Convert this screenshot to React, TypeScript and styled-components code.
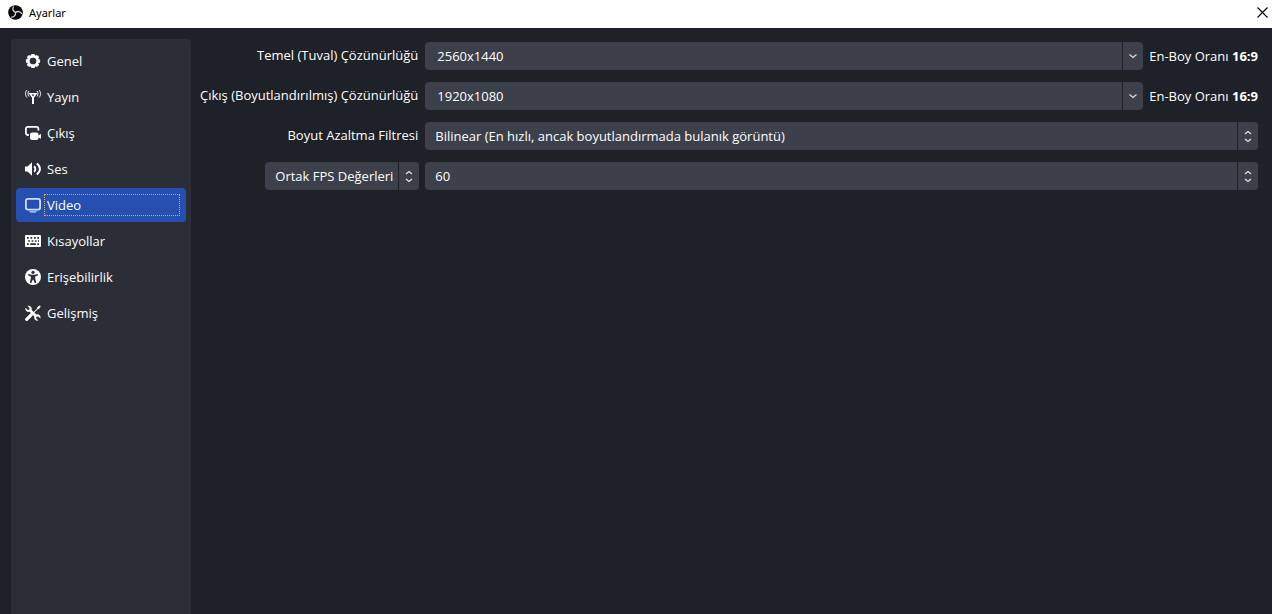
import React, { useState } from "react";
import styled, { createGlobalStyle } from "styled-components";

const GlobalStyle = createGlobalStyle`
  *, *::before, *::after { box-sizing: border-box; }
  html, body { margin: 0; padding: 0; background: #1e2128; }
  body, button, input, select {
    font-family: "Open Sans", "Noto Sans", sans-serif;
    font-size: 13px;
    line-height: 18px;
    color: #fefefe;
  }
`;

const Window = styled.div`
  display: flex;
  flex-direction: column;
  min-height: 100vh;
  background: #1e2128;
`;

const TitleBar = styled.header`
  display: flex;
  align-items: center;
  gap: 6px;
  height: 28px;
  padding: 0 3px 3px 8px;
  background: #ffffff;
  color: #000000;
`;

const Title = styled.h1`
  flex: 1;
  margin: 0;
  font-family: "Noto Sans", sans-serif;
  font-size: 11px;
  line-height: 15px;
  font-weight: 400;
`;

const CloseButton = styled.button`
  display: flex;
  padding: 0;
  border: 0;
  background: transparent;
  color: #000000;
`;

const Body = styled.div`
  flex: 1;
  display: flex;
  gap: 9px;
  padding: 11px 14px 0 11px;
`;

const Sidebar = styled.nav`
  flex: 0 0 180px;
  display: flex;
  flex-direction: column;
  gap: 2px;
  padding: 5px;
  border-radius: 4px 4px 0 0;
  background: #2b2e37;
`;

const NavItem = styled.button<{ $active: boolean }>`
  display: flex;
  align-items: center;
  gap: 3px;
  height: 34px;
  padding: 0 6px 0 9px;
  border: 0;
  border-radius: 4px;
  text-align: left;
  background: ${(p) => (p.$active ? "#264fb2" : "transparent")};
`;

const NavText = styled.span<{ $active: boolean }>`
  flex: 1;
  padding: 1px 2px;
  border: 1px dotted ${(p) => (p.$active ? "#d9b04d" : "transparent")};
`;

const Form = styled.form`
  flex: 1;
  min-width: 0;
  display: grid;
  grid-template-columns: max-content minmax(0, 1fr);
  grid-auto-rows: 28px;
  align-content: start;
  gap: 12px 6px;
  padding-top: 3px;
`;

const Label = styled.label`
  padding-right: 1px;
  text-align: right;
  line-height: 26px;
`;

const LabelCell = styled.div`
  display: flex;
  justify-content: flex-end;
`;

const Field = styled.div`
  display: flex;
  align-items: center;
  gap: 6px;
`;

const Combo = styled.div`
  flex: 1;
  min-width: 0;
  display: flex;
  gap: 1px;
  height: 28px;
`;

const ComboInput = styled.input`
  flex: 1;
  min-width: 0;
  padding: 0 12px;
  border: 0;
  border-radius: 4px 0 0 4px;
  outline: 0;
  background: #3c404b;
`;

const ComboButton = styled.button`
  display: flex;
  align-items: center;
  justify-content: center;
  width: 20px;
  padding: 0;
  border: 0;
  border-radius: 0 4px 4px 0;
  background: #3c404b;
`;

const SelectBox = styled.div<{ $compact?: boolean }>`
  flex: ${(p) => (p.$compact ? "0 0 154px" : "1")};
  min-width: 0;
  display: grid;
  grid-template-columns: minmax(0, 1fr) 21px;
  height: 28px;
`;

const Select = styled.select`
  grid-area: 1 / 1 / 2 / 3;
  width: 100%;
  height: 28px;
  padding: 0 22px 0 10px;
  border: 0;
  border-radius: 4px;
  outline: 0;
  appearance: none;
  background: #3c404b;
`;

const SelectArrows = styled.span`
  grid-area: 1 / 2;
  z-index: 1;
  display: flex;
  align-items: center;
  justify-content: center;
  border-left: 1px solid #1e2128;
  pointer-events: none;
`;

const AspectRatio = styled.span`
  white-space: nowrap;
`;

const Svg = ({ children, size = 16 }: { children: React.ReactNode; size?: number }) => (
  <svg width={size} height={size} viewBox={`0 0 ${size} ${size}`} fill="none" aria-hidden="true">
    {children}
  </svg>
);

const GearIcon = () => (
  <Svg>
    <circle cx="8" cy="8" r="4.700" stroke="#fefefe" strokeWidth="2.700" />
    {[0, 45, 90, 135, 180, 225, 270, 315].map((a) => (
      <rect key={a} x="6.2" y=".9" width="3.6" height="2.6" rx=".6" fill="#fefefe" transform={`rotate(${a} 8 8)`} />
    ))}
  </Svg>
);

const AntennaIcon = () => (
  <Svg>
    <path d="M5 4.800h6L8 8.800z" stroke="#fefefe" strokeWidth="1.500" />
    <path d="M8 8v7" stroke="#fefefe" strokeWidth="2" />
    <path d="M4 2C2.700 3.300 2.700 6.200 4 7.500M12 2c1.300 1.300 1.300 4.200 0 5.500M2 1C0 3.200 0 6.300 2 8.500M14 1c2 2.200 2 5.300 0 7.500" stroke="#fefefe" />
  </Svg>
);

const OutputIcon = () => (
  <Svg>
    <path d="M3.800 10H2.900a2 2 0 0 1-2-2V3.900a2 2 0 0 1 2-2h8.500a2 2 0 0 1 2 2v1.600" stroke="#fefefe" strokeWidth="1.800" />
    <rect x="5" y="7.500" width="8.500" height="7.500" rx="2" fill="#fefefe" />
    <path d="M12.500 11 16 8.800v5L12.500 12z" fill="#fefefe" />
  </Svg>
);

const SpeakerIcon = () => (
  <Svg>
    <path d="M0 5.500h2.500L7 1.200v13.600L2.500 10.500H0z" fill="#fefefe" />
    <path d="M9 5.200c1.800 1.500 1.800 4.100 0 5.600M11.800 2.600c4.200 3 4.200 7.800 0 10.800" stroke="#fefefe" strokeWidth="1.900" />
  </Svg>
);

const MonitorIcon = () => (
  <Svg>
    <rect x=".9" y="1.900" width="14.200" height="10.700" rx="2" stroke="#cfe0ff" strokeWidth="1.800" />
    <path d="M4 14.300h8l-1.500 1.100h-5z" fill="#cfe0ff" />
  </Svg>
);

const KeyboardIcon = () => (
  <Svg>
    <rect y="2" width="16" height="12" rx="1" fill="#fefefe" />
    <path
      d="M2 4.800h1.700M5.500 4.800h1.700M8.900 4.800h1.700M12.300 4.800H14M3.200 8h1.700M6.600 8h1.700M9.900 8h1.700M13 8h1M2 11.200h1.700M5.200 11.200h5.700M12.300 11.200H14"
      stroke="#2b2e37"
      strokeWidth="1.700"
    />
  </Svg>
);

const AccessibilityIcon = () => (
  <Svg>
    <circle cx="8" cy="8" r="8" fill="#fefefe" />
    <circle cx="8" cy="3.300" r="1.600" fill="#2b2e37" />
    <path d="m3.300 5 3 .7h3.400l3-.7.400 1.200-2.900 1.300v2.200l1 4-1.500.4L8.300 10.800h-.6l-1.400 3.300-1.500-.4 1-4V7.500L2.900 6.200z" fill="#2b2e37" />
  </Svg>
);

const ToolsIcon = () => (
  <Svg>
    <path d="m1.700 14.300 4.500-4.500" stroke="#fefefe" strokeWidth="3.200" strokeLinecap="round" />
    <path d="m6.500 9.500 5.700-5.700.5-1.700L15 .8l.4.4-1.300 2.300-1.600.6-5.600 5.700z" fill="#fefefe" stroke="#fefefe" strokeWidth=".6" />
    <path d="M2.300.8 4.600 3 4.200 4.500 2.700 4.900.5 2.700C-.2 5.500 2 7.400 4.600 6.800l4.700 4.700c-.6 2.700 1.500 4.700 4 4l-2.200-2.200.4-1.500 1.600-.4 2.300 2.200c.7-2.600-1.400-4.800-4.100-4.100L6.700 4.900C7.300 2.100 5.100.1 2.300.8z" fill="#fefefe" />
  </Svg>
);

const ObsLogo = () => (
  <Svg size={15}>
    <circle cx="7.500" cy="7.500" r="7.300" fill="#080808" />
    {[0, 120, 240].map((a) => (
      <path
        key={a}
        d="M7.500 7.500C5.200 6.700 4.200 4.300 5.300 1.900"
        stroke="#d8d8d8"
        strokeWidth="1.300"
        strokeLinecap="round"
        transform={`rotate(${a} 7.500 7.500)`}
      />
    ))}
  </Svg>
);

const CloseIcon = () => (
  <Svg size={13}>
    <path d="m1.500 1.500 10 10M11.500 1.500l-10 10" stroke="#000000" strokeWidth="1.100" />
  </Svg>
);

const ChevronDown = () => (
  <Svg size={10}>
    <path d="m1.500 3.500 3.500 3 3.500-3" stroke="#dcdde0" strokeWidth="1.300" />
  </Svg>
);

const UpDownIcon = () => (
  <Svg size={14}>
    <path d="m4 5 3-2.500L10 5M4 10l3 2.500 3-2.500" stroke="#e8e8ea" strokeWidth="1.200" />
  </Svg>
);

const sections = [
  { name: "Genel", Icon: GearIcon },
  { name: "Yayın", Icon: AntennaIcon },
  { name: "Çıkış", Icon: OutputIcon },
  { name: "Ses", Icon: SpeakerIcon },
  { name: "Video", Icon: MonitorIcon },
  { name: "Kısayollar", Icon: KeyboardIcon },
  { name: "Erişebilirlik", Icon: AccessibilityIcon },
  { name: "Gelişmiş", Icon: ToolsIcon },
];

function ResolutionRow({ id, label, initial }: { id: string; label: string; initial: string }) {
  const [value, setValue] = useState(initial);
  return (
    <>
      <Label htmlFor={id}>{label}</Label>
      <Field>
        <Combo>
          <ComboInput id={id} type="text" value={value} onChange={(e) => setValue(e.target.value)} />
          <ComboButton type="button" aria-label={label}>
            <ChevronDown />
          </ComboButton>
        </Combo>
        <AspectRatio>
          En-Boy Oranı <b>16:9</b>
        </AspectRatio>
      </Field>
    </>
  );
}

function Dropdown({ id, label, option, compact }: { id: string; label?: string; option: string; compact?: boolean }) {
  return (
    <SelectBox $compact={compact}>
      <Select id={id} aria-label={label}>
        <option>{option}</option>
      </Select>
      <SelectArrows>
        <UpDownIcon />
      </SelectArrows>
    </SelectBox>
  );
}

export default function App() {
  const [active, setActive] = useState("Video");
  return (
    <Window>
      <GlobalStyle />
      <TitleBar>
        <ObsLogo />
        <Title>Ayarlar</Title>
        <CloseButton type="button" aria-label="Kapat">
          <CloseIcon />
        </CloseButton>
      </TitleBar>
      <Body>
        <Sidebar>
          {sections.map(({ name, Icon }) => (
            <NavItem key={name} type="button" $active={name === active} onClick={() => setActive(name)}>
              <Icon />
              <NavText $active={name === active}>{name}</NavText>
            </NavItem>
          ))}
        </Sidebar>
        <Form>
          <ResolutionRow id="base" label="Temel (Tuval) Çözünürlüğü" initial="2560x1440" />
          <ResolutionRow id="output" label="Çıkış (Boyutlandırılmış) Çözünürlüğü" initial="1920x1080" />
          <Label htmlFor="filter">Boyut Azaltma Filtresi</Label>
          <Dropdown id="filter" option="Bilinear (En hızlı, ancak boyutlandırmada bulanık görüntü)" />
          <LabelCell>
            <Dropdown id="fps-type" label="FPS türü" option="Ortak FPS Değerleri" compact />
          </LabelCell>
          <Dropdown id="fps" label="FPS" option="60" />
        </Form>
      </Body>
    </Window>
  );
}
